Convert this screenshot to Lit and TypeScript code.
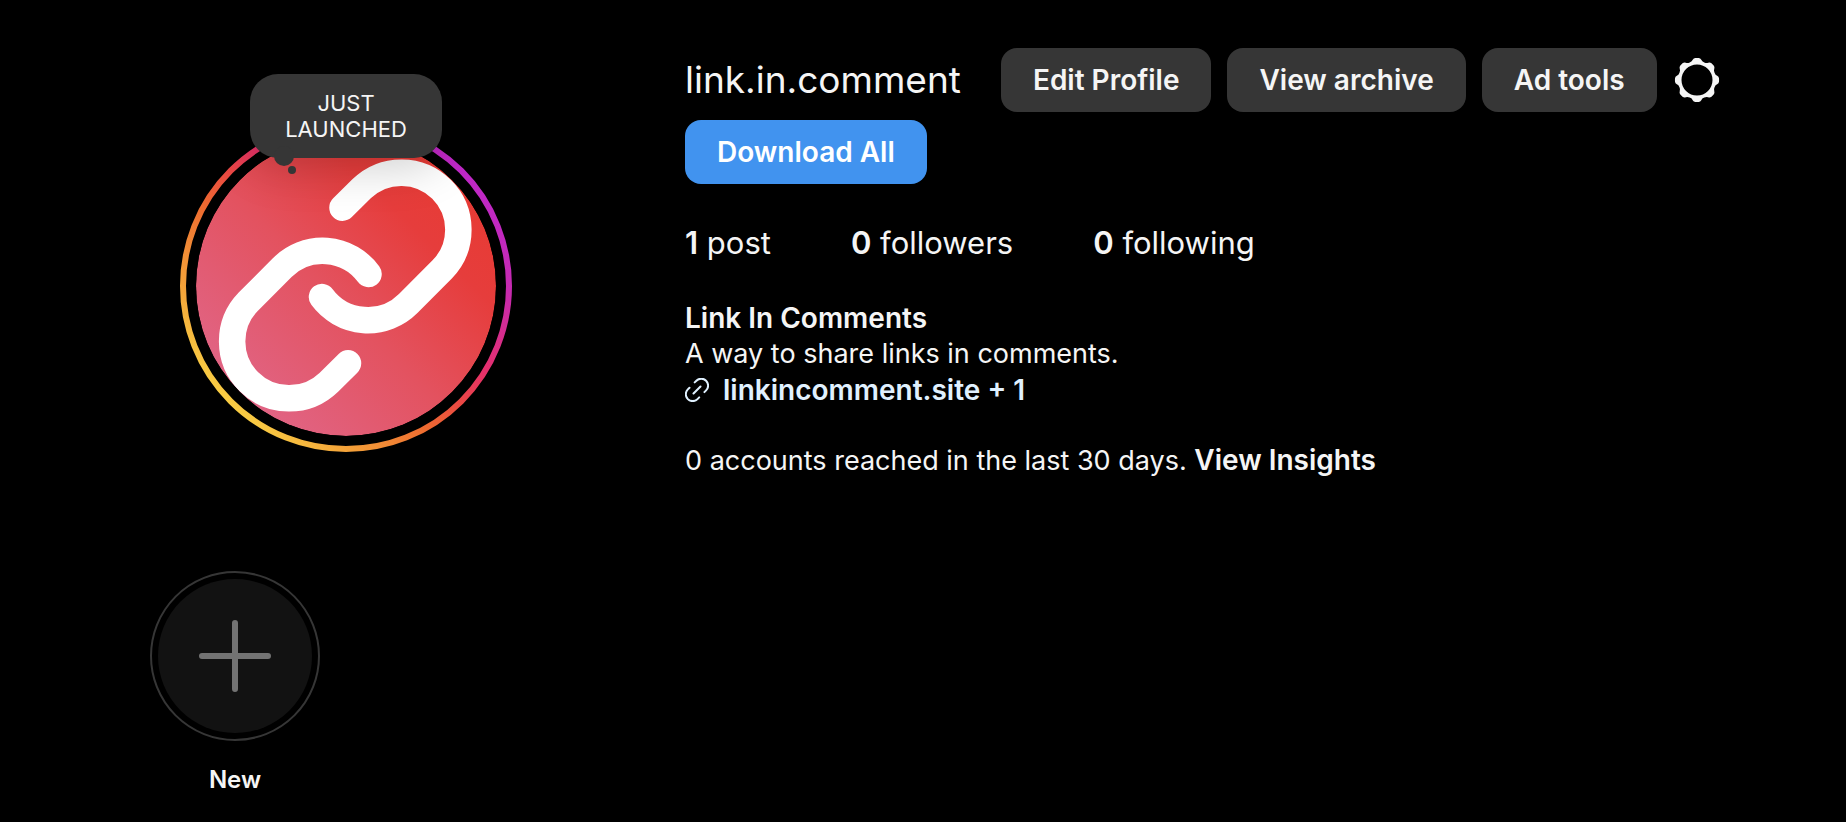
import { LitElement, html, css } from "lit";
import { customElement } from "lit/decorators.js";

/** Outline of the eight-toothed settings gear, centred on 24,24. */
function gearOutline(): string {
  const at = (r: number, deg: number) => {
    const a = (deg * Math.PI) / 180;
    return `${(24 + r * Math.cos(a)).toFixed(2)} ${(24 + r * Math.sin(a)).toFixed(2)}`;
  };
  let d = `M${at(19, -22.5)}`;
  for (let k = 0; k < 8; k++) {
    const c = k * 45;
    d += `Q${at(19, c - 15)} ${at(20.6, c - 12)}`;
    d += `Q${at(22.1, c - 9)} ${at(22.1, c - 4)}`;
    d += `L${at(22.1, c + 4)}`;
    d += `Q${at(22.1, c + 9)} ${at(20.6, c + 12)}`;
    d += `Q${at(19, c + 15)} ${at(19, c + 22.5)}`;
  }
  return d + "ZM39.5 24A15.5 15.5 0 1 0 8.5 24A15.5 15.5 0 1 0 39.5 24Z";
}

const chainHalf = "M162.5 87.7L181.7 68.7A57 57 0 0 1 262.3 149.3L228.3 183.3A57 57 0 0 1 142 177";

const stats = [
  { count: "1", label: "post" },
  { count: "0", label: "followers" },
  { count: "0", label: "following" },
];

@customElement("profile-avatar")
export class ProfileAvatar extends LitElement {
  static styles = css`
    :host { display: block; position: relative; width: 332px; }
    .art { display: block; width: 100%; }
    .note {
      position: absolute;
      top: -46px;
      left: 50%;
      transform: translateX(-50%);
      box-sizing: border-box;
      width: 192px;
      padding: 16px 24px;
      border-radius: 28px;
      background: #363636;
      color: #f5f5f5;
      font-size: 22px;
      line-height: 26px;
      text-align: center;
      box-shadow: 0 8px 48px rgba(0, 0, 0, 0.2);
    }
    .dot { position: absolute; border-radius: 50%; background: #363636; }
    .big { width: 20px; height: 20px; left: 24px; bottom: -8px; }
    .small { width: 8px; height: 8px; left: 38px; bottom: -16px; }
  `;

  render() {
    return html`
      <svg class="art" viewBox="0 0 332 332" role="img" aria-label="Profile photo">
        <defs>
          <linearGradient id="ring" gradientUnits="userSpaceOnUse" x1="48" y1="284" x2="284" y2="48">
            <stop offset="0" stop-color="#f9ce44" />
            <stop offset="0.14" stop-color="#f4a63a" />
            <stop offset="0.37" stop-color="#ee6a30" />
            <stop offset="0.5" stop-color="#ea4745" />
            <stop offset="0.61" stop-color="#e7306a" />
            <stop offset="0.84" stop-color="#c62ab0" />
            <stop offset="1" stop-color="#bf28c8" />
          </linearGradient>
          <linearGradient id="photo" gradientUnits="userSpaceOnUse" x1="60" y1="272" x2="272" y2="60">
            <stop offset="0" stop-color="#e16484" />
            <stop offset="0.45" stop-color="#e3525f" />
            <stop offset="0.8" stop-color="#e63d3c" />
            <stop offset="1" stop-color="#e73b35" />
          </linearGradient>
          <clipPath id="disc"><circle cx="166" cy="166" r="150" /></clipPath>
        </defs>
        <circle cx="166" cy="166" r="163" fill="none" stroke="url(#ring)" stroke-width="6" />
        <g clip-path="url(#disc)">
          <circle cx="166" cy="166" r="150" fill="url(#photo)" />
          <g fill="none" stroke="#fff" stroke-width="26.5" stroke-linecap="round">
            <path d=${chainHalf} />
            <path d=${chainHalf} transform="rotate(180 165.25 165.5)" />
          </g>
        </g>
      </svg>
      <div class="note">JUST LAUNCHED<span class="dot big"></span><span class="dot small"></span></div>
    `;
  }
}

@customElement("app-root")
export class AppRoot extends LitElement {
  static styles = css`
    :host {
      display: block;
      min-height: 100vh;
      box-sizing: border-box;
      background: #000;
      color: #f5f5f5;
      font-family: Inter, "Liberation Sans", sans-serif;
      font-size: 27px;
      line-height: 36px;
    }
    h1, h2, p, ul { margin: 0; padding: 0; font-size: inherit; font-weight: inherit; }
    ul { list-style: none; }
    a { color: inherit; text-decoration: none; }
    .header { display: flex; gap: 74px; padding: 48px 81px 0; }
    .photo { flex: 0 0 530px; display: flex; justify-content: center; padding-top: 72px; }
    .info { flex: 1; min-width: 0; }
    .toolbar { display: flex; flex-wrap: wrap; align-items: center; gap: 8px 16px; }
    .username { margin-right: 24px; font-size: 37px; line-height: 48px; }
    .button {
      height: 64px;
      padding: 0 32px;
      border: 0;
      border-radius: 16px;
      background: #363636;
      color: #f5f5f5;
      font: inherit;
      font-size: 28px;
      font-weight: 600;
      cursor: pointer;
    }
    .primary { background: #4193ef; color: #fff; }
    .gear { width: 48px; height: 48px; padding: 0; border: 0; background: none; color: #f5f5f5; cursor: pointer; }
    .gear svg { display: block; }
    .stats { display: flex; gap: 80px; margin-top: 41px; font-size: 31px; }
    .stats b { font-weight: 600; }
    .strong { font-size: 28px; font-weight: 600; }
    .bio { margin-top: 39px; }
    .site { display: flex; align-items: center; gap: 14px; color: #e0f1ff; }
    .insights { margin-top: 34px; }
    .highlights { display: flex; padding: 92px 150px 0; }
    .highlight {
      width: 170px;
      padding: 0;
      border: 0;
      background: none;
      color: #f5f5f5;
      font: inherit;
      font-size: 24px;
      line-height: 32px;
      font-weight: 600;
      cursor: pointer;
    }
    .highlight svg { display: block; margin-bottom: 23px; }
  `;

  render() {
    return html`
      <header class="header">
        <div class="photo"><profile-avatar></profile-avatar></div>
        <section class="info">
          <div class="toolbar">
            <h2 class="username">link.in.comment</h2>
            <button class="button">Edit Profile</button>
            <button class="button">View archive</button>
            <button class="button">Ad tools</button>
            <button class="gear" aria-label="Options">
              <svg width="48" height="48" viewBox="0 0 48 48" fill="currentColor" fill-rule="evenodd">
                <path d=${gearOutline()} />
              </svg>
            </button>
            <button class="button primary">Download All</button>
          </div>
          <ul class="stats">
            ${stats.map((s) => html`<li><b>${s.count}</b> ${s.label}</li>`)}
          </ul>
          <div class="bio">
            <h1 class="strong">Link In Comments</h1>
            <p>A way to share links in comments.</p>
            <a class="site strong" href="#links">
              <svg width="24" height="24" viewBox="0 0 24 24" fill="none" stroke="currentColor" stroke-width="2" stroke-linecap="round" aria-hidden="true">
                <path d="M9.7 4.4l1.7-1.7a6.8 6.8 0 0 1 9.7 9.7l-1.7 1.7M4.5 9.7l-1.7 1.7a6.8 6.8 0 0 0 9.7 9.7l1.7-1.7M8.5 15.5l7-7" />
              </svg>
              <span>linkincomment.site + 1</span>
            </a>
          </div>
          <p class="insights">
            0 accounts reached in the last 30 days. <a class="strong" href="#insights">View Insights</a>
          </p>
        </section>
      </header>
      <nav class="highlights">
        <button class="highlight">
          <svg width="170" height="170" viewBox="0 0 170 170" fill="none" aria-hidden="true">
            <circle cx="85" cy="85" r="84" stroke="#363636" stroke-width="2" />
            <circle cx="85" cy="85" r="77" fill="#121212" />
            <path d="M85 52v66M52 85h66" stroke="#737373" stroke-width="6" stroke-linecap="round" />
          </svg>
          New
        </button>
      </nav>
    `;
  }
}
